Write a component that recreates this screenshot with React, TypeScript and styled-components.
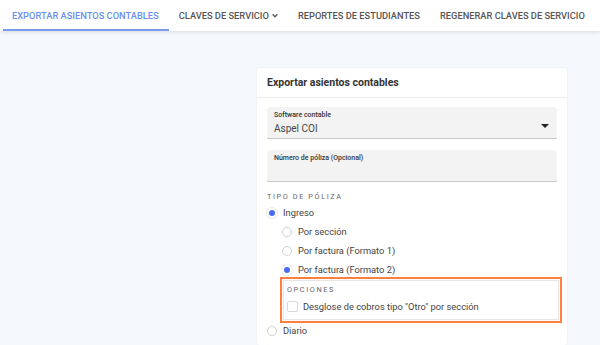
import React from "react";
import styled, { createGlobalStyle } from "styled-components";

const Global = createGlobalStyle`
  html, body { margin: 0; padding: 0; }
  body {
    background: #f5f9fd;
    font-family: Roboto, "Noto Sans", Arial, sans-serif;
    color: #333;
    width: 600px;
    height: 345px;
    overflow: hidden;
  }
`;

const Page = styled.div`
  display: flex;
  flex-direction: column;
  height: 345px;
`;

const NavBar = styled.nav`
  display: flex;
  align-items: stretch;
  height: 31px;
  background: #fff;
  box-shadow: 0 1px 4px rgba(0, 0, 0, 0.12);
  padding-left: 3px;
  position: relative;
  z-index: 1;
`;

const Tab = styled.div<{ $active?: boolean }>`
  display: flex;
  align-items: center;
  gap: 3px;
  padding: 2px 10px 0 ${(p) => (p.$active ? 9 : 10)}px;
  font-size: 9.3px;
  font-weight: 500;
  text-transform: uppercase;
  color: ${(p) => (p.$active ? "#6b8ff0" : "#555")};
  border-bottom: 2px solid ${(p) => (p.$active ? "#7a9af0" : "transparent")};
  white-space: nowrap;
`;

const Content = styled.div`
  display: flex;
  justify-content: flex-start;
  padding: 37px 0 0 257px;
  flex: 1;
`;

const Card = styled.section`
  width: 310px;
  background: #fff;
  border-radius: 3px;
  box-shadow: 0 0 2px rgba(0, 0, 0, 0.08);
  display: flex;
  flex-direction: column;
`;

const CardHeader = styled.div`
  padding: 0 10px;
  height: 30px;
  box-sizing: border-box;
  border-bottom: 1px solid #ececec;
  font-size: 10.5px;
  font-weight: 700;
  color: #333;
  display: flex;
  align-items: center;
`;

const CardBody = styled.div`
  padding: 9px 10px 0 10px;
  display: flex;
  flex-direction: column;
`;

const Field = styled.div<{ $mb?: number }>`
  height: 32px;
  background: #f3f3f3;
  border-radius: 4px 4px 0 0;
  border-bottom: 1px solid #c9c9c9;
  box-sizing: border-box;
  padding: 4px 7px 0 7px;
  display: flex;
  flex-direction: column;
  position: relative;
  margin-bottom: ${(p) => p.$mb ?? 0}px;
`;

const FieldLabel = styled.span`
  font-size: 7px;
  font-weight: 500;
  color: #333;
  line-height: 9px;
`;

const FieldValue = styled.span`
  font-size: 10px;
  color: #444;
  line-height: 13px;
  margin-top: 2px;
`;

const Caret = styled.span`
  position: absolute;
  right: 8px;
  top: 17px;
  width: 0;
  height: 0;
  border-left: 4px solid transparent;
  border-right: 4px solid transparent;
  border-top: 4px solid #222;
`;

const SectionTitle = styled.div`
  font-size: 7.3px;
  letter-spacing: 1.6px;
  color: #666;
  margin: 10px 0 2px 0;
  text-transform: uppercase;
`;

const RadioRow = styled.label<{ $indent?: number }>`
  display: flex;
  align-items: center;
  gap: 6px;
  height: 19px;
  padding-left: ${(p) => p.$indent ?? 0}px;
  font-size: 9.3px;
  color: #444;
`;

const RadioCircle = styled.span<{ $on?: boolean }>`
  width: 10px;
  height: 10px;
  border-radius: 50%;
  box-sizing: border-box;
  border: ${(p) => (p.$on ? "2px solid #fff" : "1px solid #d2d2d2")};
  background: ${(p) => (p.$on ? "#4a6cf5" : "#fff")};
  box-shadow: ${(p) => (p.$on ? "0 0 0 1px #ececec" : "none")};
  flex-shrink: 0;
`;

const Highlight = styled.div`
  margin: -2px -5px -2px 13px;
  border: 2px solid #ff7f3f;
  padding: 1px;
`;

const OptionsBox = styled.div`
  border: 1px solid #e6e6e6;
  padding: 4px 3px 5px 3px;
  display: flex;
  flex-direction: column;
`;

const OptionsTitle = styled.div`
  font-size: 7.3px;
  letter-spacing: 1.6px;
  color: #666;
  text-transform: uppercase;
  margin-bottom: 5px;
`;

const CheckRow = styled.label`
  display: flex;
  align-items: center;
  gap: 5px;
  font-size: 9.3px;
  color: #444;
  height: 15px;
`;

const CheckBox = styled.span`
  width: 11px;
  height: 11px;
  border: 1px solid #d8d8d8;
  border-radius: 2px;
  background: #fff;
  flex-shrink: 0;
  box-sizing: border-box;
`;

export default function App() {
  return (
    <>
      <Global />
      <Page>
        <NavBar>
          <Tab $active>Exportar asientos contables</Tab>
          <Tab>
            Claves de servicio
            <svg width="6" height="5" viewBox="0 0 10 7">
              <path d="M1 1.5 L5 5.5 L9 1.5" fill="none" stroke="#555" strokeWidth="2.2" />
            </svg>
          </Tab>
          <Tab>Reportes de estudiantes</Tab>
          <Tab>Regenerar claves de servicio</Tab>
        </NavBar>
        <Content>
          <Card>
            <CardHeader>Exportar asientos contables</CardHeader>
            <CardBody>
              <Field $mb={11}>
                <FieldLabel>Software contable</FieldLabel>
                <FieldValue>Aspel COI</FieldValue>
                <Caret />
              </Field>
              <Field>
                <FieldLabel>Número de póliza (Opcional)</FieldLabel>
              </Field>
              <SectionTitle>Tipo de póliza</SectionTitle>
              <RadioRow>
                <RadioCircle $on />
                Ingreso
              </RadioRow>
              <RadioRow $indent={15}>
                <RadioCircle />
                Por sección
              </RadioRow>
              <RadioRow $indent={15}>
                <RadioCircle />
                Por factura (Formato 1)
              </RadioRow>
              <RadioRow $indent={15}>
                <RadioCircle $on />
                Por factura (Formato 2)
              </RadioRow>
              <Highlight>
                <OptionsBox>
                  <OptionsTitle>Opciones</OptionsTitle>
                  <CheckRow>
                    <CheckBox />
                    Desglose de cobros tipo "Otro" por sección
                  </CheckRow>
                </OptionsBox>
              </Highlight>
              <RadioRow>
                <RadioCircle />
                Diario
              </RadioRow>
            </CardBody>
          </Card>
        </Content>
      </Page>
    </>
  );
}
